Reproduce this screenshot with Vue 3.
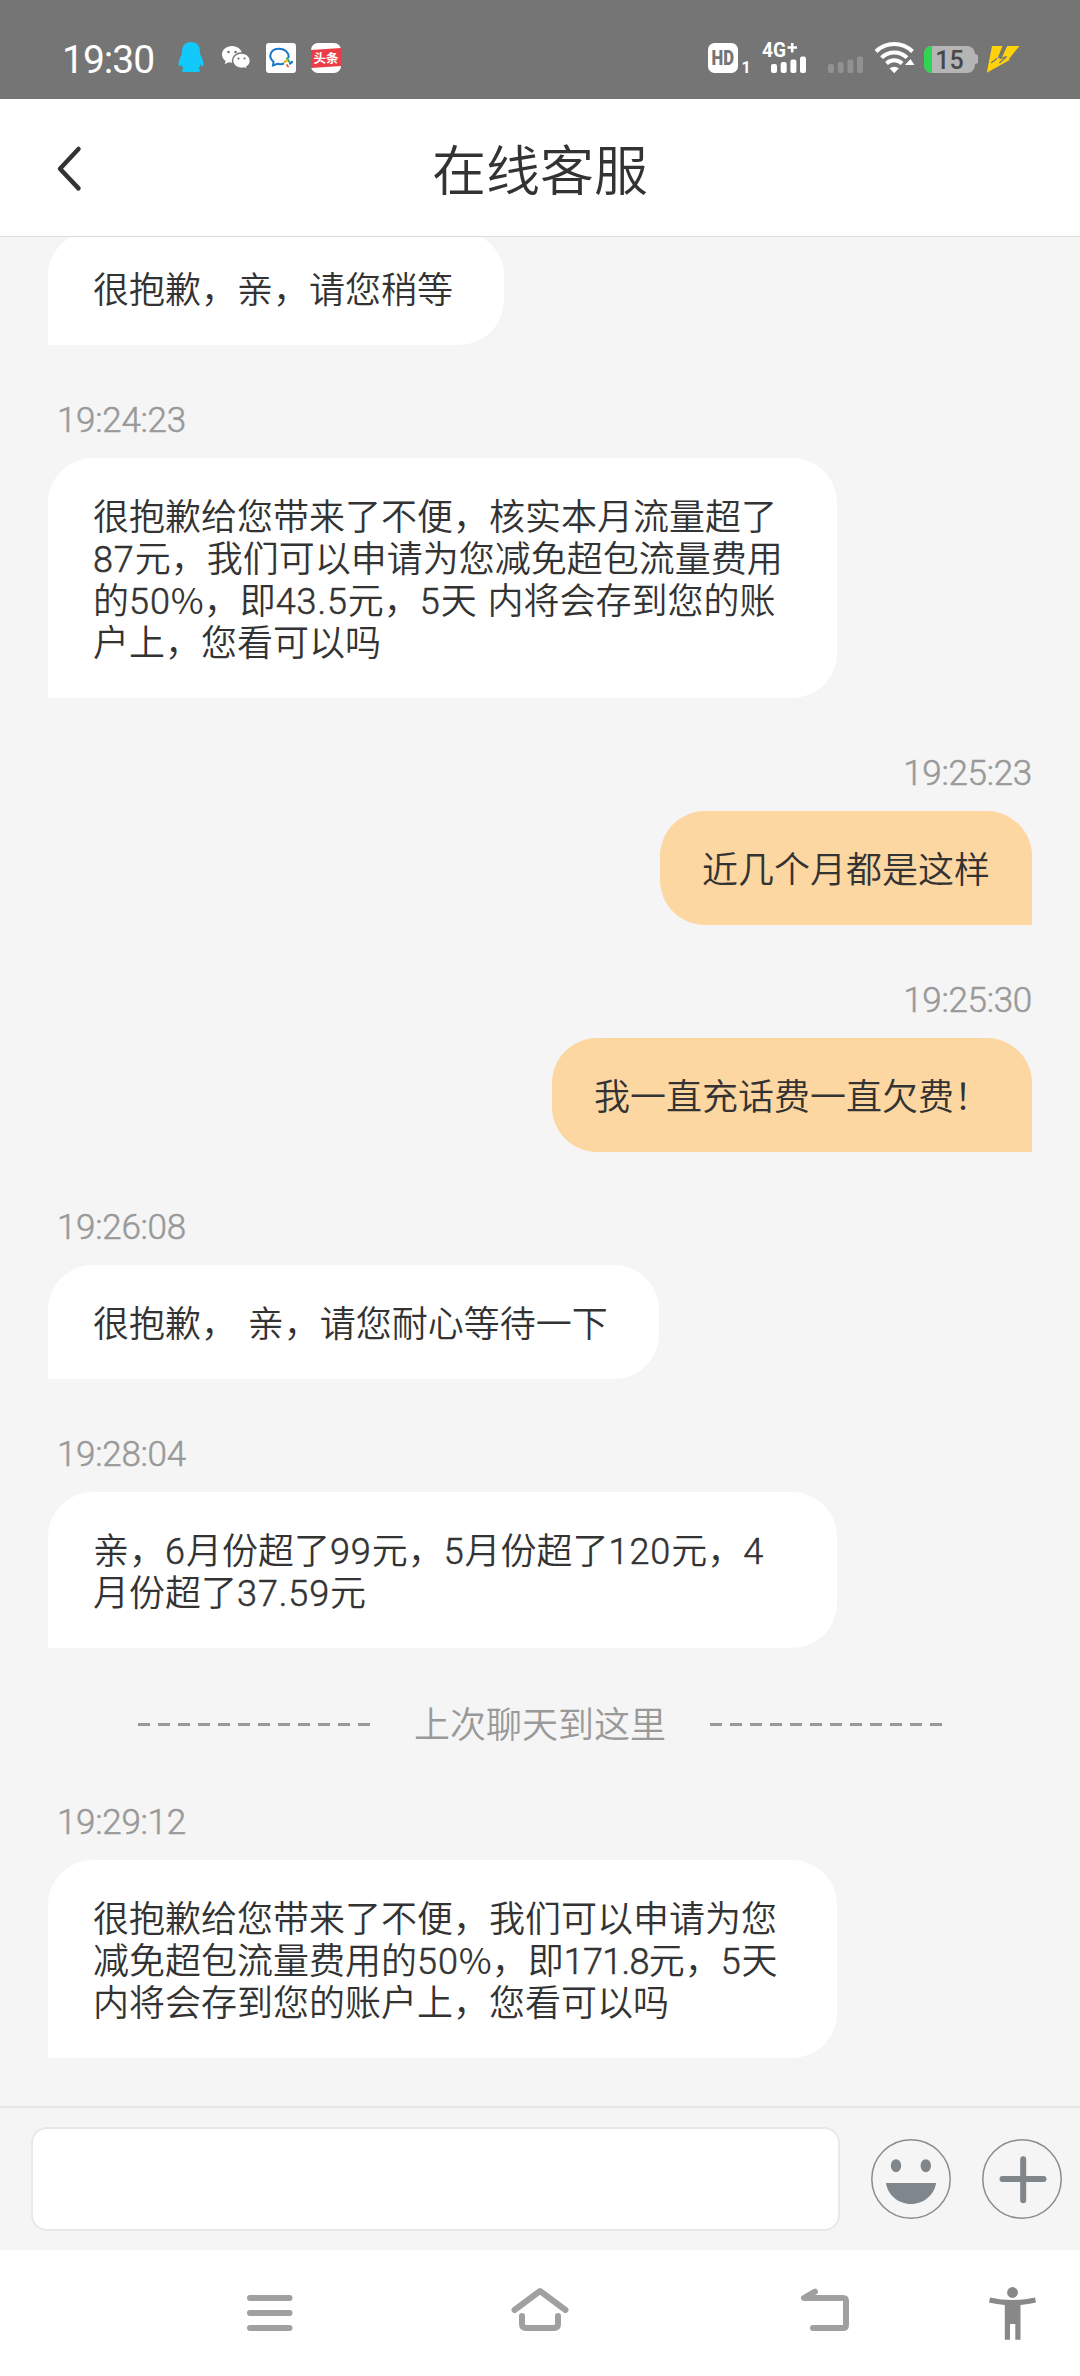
<script setup>
const messages = [
  { side: 'left', lines: ['很抱歉，亲，请您稍等'] },
  {
    side: 'left',
    time: '19:24:23',
    wide: true,
    lines: [
      '很抱歉给您带来了不便，核实本月流量超了',
      '87元，我们可以申请为您减免超包流量费用',
      '的50%，即43.5元，5天 内将会存到您的账',
      '户上，您看可以吗',
    ],
  },
  { side: 'right', time: '19:25:23', lines: ['近几个月都是这样'] },
  { side: 'right', time: '19:25:30', lines: ['我一直充话费一直欠费！'] },
  { side: 'left', time: '19:26:08', lines: ['很抱歉， 亲，请您耐心等待一下'] },
  {
    side: 'left',
    time: '19:28:04',
    wide: true,
    lines: ['亲，6月份超了99元，5月份超了120元，4', '月份超了37.59元'],
  },
  {
    side: 'left',
    time: '19:29:12',
    wide: true,
    divider: '上次聊天到这里',
    lines: [
      '很抱歉给您带来了不便，我们可以申请为您',
      '减免超包流量费用的50%，即171.8元，5天',
      '内将会存到您的账户上，您看可以吗',
    ],
  },
]

// Splits a line into runs so that figures can be spaced apart from the Chinese text.
const runs = (line) =>
  line
    .split(/([0-9.]+|%)/)
    .filter(Boolean)
    .map((text) => ({
      text,
      kind: text === '%' ? 'pct' : /^[0-9.]+$/.test(text) ? (text.includes('71') ? 'num kerned' : 'num') : 'han',
    }))
</script>

<template>
  <div class="phone" lang="zh-CN">
    <div class="status">
      <span class="clock">19:30</span>
      <svg class="apps" width="166" height="32" viewBox="177 42 166 32">
        <path fill="#12c9fb" d="M191 42c-6.500 0-9 4.500-9 9.500 0 2-.3 3-1 4.500-2 4-3 7-2.300 10 .5 1 1.700-.3 2.800-1.500.4 1.700 1 2.800 2 4-2 .8-2.300 3.500.5 3.500h14c2.800 0 2.500-2.700.5-3.500 1-1.200 1.600-2.300 2-4 1.100 1.200 2.300 2.500 2.800 1.500.7-3-.3-6-2.300-10-.7-1.500-1-2.500-1-4.500 0-5-2.500-9.500-9-9.500z" />
        <path fill="#fff" d="M232 46c-5.800 0-10 3.800-10 8.500 0 2.700 1.400 5 3.700 6.500l-1 3.200 3.800-1.900c1.200.3 2.300.5 3.600.5 5.800 0 10-3.800 10-8.300 0-4.700-4.500-8.500-10.100-8.500z" />
        <path fill="#fff" stroke="#757575" stroke-width="1.500" d="M241.500 53c-5.200 0-9 3.500-9 7.700s3.800 7.700 9 7.700c1 0 2-.1 2.900-.4l3.300 1.800-.9-2.900c2.200-1.400 3.600-3.600 3.600-6.200 0-4.200-3.900-7.700-8.900-7.700z" />
        <g fill="#757575"><circle cx="228.500" cy="52" r="1.300" /><circle cx="235.500" cy="52" r="1.300" /><circle cx="238.500" cy="58.500" r="1.100" /><circle cx="244.500" cy="58.500" r="1.100" /></g>
        <rect x="266" y="43" width="30" height="30" rx="3" fill="#fff" />
        <path fill="none" stroke="#1c78c8" stroke-width="2" d="M284 63.500c-2 .7-4.500.8-6.500.3l-4.500 1.700.5-3.700c-6-5-3-13 5.500-13 6.500 0 10.500 4.500 9.500 9.500" />
        <path fill="none" stroke="#2fae58" stroke-width="2.200" stroke-linecap="round" d="M287 58.500l2 3" />
        <path fill="none" stroke="#e9b72c" stroke-width="2.200" stroke-linecap="round" d="M284.500 62l2.500-1.500" />
        <path fill="none" stroke="#e06a3c" stroke-width="2" stroke-linecap="round" d="M287 65l1 1.500" />
        <path fill="none" stroke="#1c78c8" stroke-width="2.200" stroke-linecap="round" d="M290 63.500l2-1.500" />
        <rect x="311" y="43" width="30" height="30" rx="7" fill="#fff" />
        <path fill="#eb3d45" d="M311 50l30-2v18l-30 2z" />
        <text x="326" y="62.500" text-anchor="middle" class="toutiao">头条</text>
      </svg>
      <svg class="signals" width="316" height="50" viewBox="706 33 316 50">
        <rect x="708" y="43" width="30" height="30" rx="6.500" fill="#fff" />
        <text x="711.500" y="65.300" class="hd" textLength="22.500" lengthAdjust="spacingAndGlyphs">HD</text>
        <text x="741.500" y="72.500" class="sim">1</text>
        <text x="762" y="57.300" class="net" textLength="24" lengthAdjust="spacingAndGlyphs">4G</text>
        <path stroke="#fff" stroke-width="2.600" d="M787.500 47.500h9.500M792.200 43v9.500" />
        <g fill="#fff">
          <rect x="771" y="64" width="6" height="9" rx="2" /><rect x="780.700" y="62" width="6" height="11" rx="2" />
          <rect x="790.400" y="59.500" width="6" height="13.500" rx="2" /><rect x="800" y="56.500" width="6" height="16.500" rx="2" />
        </g>
        <g fill="#919191">
          <rect x="828" y="64" width="6" height="9" rx="2" /><rect x="837.700" y="62" width="6" height="11" rx="2" />
          <rect x="847.400" y="59.500" width="6" height="13.500" rx="2" /><rect x="857" y="56.500" width="6" height="16.500" rx="2" />
        </g>
        <g fill="none" stroke="#fff" stroke-width="4">
          <path d="M876 51.500a26 26 0 0 1 36.500 0" />
          <path d="M881.500 57.700a18 18 0 0 1 25.500 0" />
          <path d="M886.500 63.500a11 11 0 0 1 15.500 0" />
        </g>
        <path fill="#fff" d="M889.500 68.300q4.700-3.200 9.400 0l-4.700 5zM905 65l5.500-6 4 6z" />
        <rect x="924" y="46" width="51" height="27" rx="8" fill="#b5b5b5" />
        <path fill="#b5b5b5" d="M975 54c2 0 3 1 3 2.500v5c0 1.500-1 2.500-3 2.500z" />
        <path fill="#2fd550" d="M932 46v27a8 8 0 0 1-8-8V54a8 8 0 0 1 8-8z" />
        <text x="949.500" y="68.600" text-anchor="middle" class="percent">15</text>
        <path fill="#ffd20a" d="M992 46h10.500l-5 12.500 4.500-1.500 4.500-11H1019.500l-11 13.500h2L986.800 72.700z" />
        <path fill="none" stroke="#757575" stroke-width="1.300" d="M1007 45l-6.500 13.500 6-2-7 6.500M991 63l6-4.500" />
      </svg>
    </div>

    <header class="header">
      <svg class="back" width="30" height="50" viewBox="0 0 30 50"><path d="M25.500 6L7 25.700 25.500 45.400" /></svg>
      <h1>在线客服</h1>
    </header>

    <main class="chat">
      <template v-for="(m, i) in messages" :key="i">
        <div v-if="m.divider" class="divider">
          <i class="dashes"></i><span>{{ m.divider }}</span><i class="dashes"></i>
        </div>
        <time v-if="m.time" :class="['time', m.side]">{{ m.time }}</time>
        <div :class="['bubble', m.side, { wide: m.wide }]">
          <p v-for="line in m.lines" :key="line"><span v-for="(r, j) in runs(line)" :key="j" :class="r.kind">{{ r.text }}</span></p>
        </div>
      </template>
    </main>

    <footer class="composer">
      <div class="input"></div>
      <svg width="82" height="82" viewBox="0 0 82 82">
        <circle class="ring" cx="41" cy="41" r="39.200" />
        <ellipse cx="26" cy="27.700" rx="5.200" ry="6.500" fill="#81868b" />
        <ellipse cx="55.800" cy="27.700" rx="5.200" ry="6.500" fill="#81868b" />
        <path d="M16 45h50c-1.500 11.500-12 21-25 21s-23.500-9.500-25-21z" fill="#7f868c" />
      </svg>
      <svg class="plus" width="82" height="82" viewBox="0 0 82 82">
        <circle class="ring" cx="41" cy="41" r="39.200" />
        <path d="M21.500 41h41M42.200 21.300v41" stroke="#81868b" stroke-width="6" stroke-linecap="round" />
      </svg>
    </footer>

    <nav class="nav">
      <svg width="1080" height="126" viewBox="0 2250 1080 126">
        <g fill="none" stroke="#a0a0a0" stroke-width="6" stroke-linecap="round" stroke-linejoin="round">
          <path d="M250 2298h39.500M250 2313h39.500M250 2328h39.500" />
          <path d="M514.500 2310l25.500-19 25.500 19M522 2316v8q0 4 4 4h28q4 0 4-4v-8" />
          <path d="M815 2291.700l-11 6.300h39q3 0 3 3v24q0 3-3 3h-30" />
        </g>
        <g fill="#888">
          <circle cx="1012.500" cy="2292.500" r="5.400" />
          <path d="M990 2297.500q22.500 5 45 0l1 5q-7.500 1.700-15.500 2.500v34.700h-5.200V2324h-5.300v15.700h-5.200V2305q-8-.8-15.800-2.500z" />
        </g>
      </svg>
    </nav>
  </div>
</template>

<style>
body {
  margin: 0;
}
</style>

<style scoped>
.phone {
  width: 1080px;
  height: 2376px;
  display: flex;
  flex-direction: column;
  background: #f5f5f5;
  font-family: Roboto, 'Noto Sans CJK SC', sans-serif;
  font-weight: 350;
  color: #333;
  overflow: hidden;
}
.status {
  flex: none;
  height: 99px;
  box-sizing: border-box;
  padding: 16px 58px 0 62px;
  display: flex;
  align-items: center;
  background: #757575;
  color: #fff;
}
.clock {
  width: 115px;
  font-size: 39px;
  font-weight: 400;
  letter-spacing: -1px;
  line-height: 46px;
  padding-top: 5px;
}
.signals {
  margin-left: auto;
}
.toutiao {
  font: 700 12.500px 'Noto Sans CJK SC', sans-serif;
  fill: #fff;
}
.hd {
  font: 900 20px Roboto, sans-serif;
  fill: #757575;
}
.sim {
  font: 700 16px Roboto, sans-serif;
  fill: #fff;
}
.net {
  font: 700 20px Roboto, sans-serif;
  fill: #fff;
}
.percent {
  font: 500 25px Roboto, sans-serif;
  fill: #484848;
}
.header {
  flex: none;
  height: 138px;
  box-sizing: border-box;
  border-bottom: 1px solid #dcdcdc;
  padding: 0 53px;
  display: flex;
  align-items: center;
  justify-content: space-between;
  background: #fff;
}
.header::after {
  content: '';
  width: 30px;
}
.back path {
  fill: none;
  stroke: #333;
  stroke-width: 4.500;
  stroke-linecap: round;
  stroke-linejoin: round;
}
h1 {
  margin: 0;
  padding-top: 10px;
  font-size: 54px;
  font-weight: 350;
  line-height: 70px;
}
.chat {
  flex: 1;
  min-height: 0;
  display: flex;
  flex-direction: column;
  justify-content: flex-end;
  align-items: flex-start;
  padding: 0 48px;
  padding-bottom: 48px;
  overflow: hidden;
}
.time {
  flex: none;
  height: 113px;
  box-sizing: border-box;
  padding: 56px 10px 0 9px;
  font-size: 35px;
  line-height: 40px;
  letter-spacing: -0.300px;
  color: #999;
  -webkit-text-stroke: 0.500px #999;
}
.time.right {
  padding-right: 0;
}
.bubble {
  flex: none;
  box-sizing: border-box;
  padding: 39px 51px 33px 45px;
  border-radius: 45px 45px 45px 0;
  background: #fff;
  font-size: 36px;
  line-height: 42px;
  word-spacing: 2px;
}
.bubble.wide {
  width: 789px;
  padding-right: 0;
}
.right {
  align-self: flex-end;
}
.bubble.right {
  padding: 39px 42px 33px;
  border-radius: 45px 45px 0 45px;
  background: #fcd7a2;
}
.bubble p {
  margin: 0;
  height: 42px;
  white-space: pre;
}
.num {
  letter-spacing: 0.900px;
  -webkit-text-stroke: 0.500px #333;
}
.num.kerned {
  letter-spacing: -0.700px;
}
.pct {
  font-family: 'Noto Sans CJK SC', sans-serif;
  line-height: 0;
}
.divider {
  flex: none;
  align-self: stretch;
  height: 99px;
  box-sizing: border-box;
  padding-top: 53px;
  display: flex;
  align-items: center;
  justify-content: center;
  gap: 44px;
  font-size: 36px;
  line-height: 42px;
  color: #999;
}
.divider span {
  padding-top: 4px;
}
.dashes {
  width: 232px;
  height: 3px;
  background: repeating-linear-gradient(90deg, #999 0 12px, transparent 12px 20px);
}
.composer {
  flex: none;
  height: 144px;
  box-sizing: border-box;
  border-top: 2px solid #e6e6e6;
  padding: 0 17px 0 31px;
  display: flex;
  align-items: center;
}
.input {
  width: 809px;
  height: 104px;
  box-sizing: border-box;
  border: 2px solid #e8e8e8;
  border-radius: 16px;
  margin-right: 30px;
  background: #fff;
}
.plus {
  margin-left: 29px;
}
.ring {
  fill: none;
  stroke: #8c8c8c;
  stroke-width: 1.500;
}
.nav {
  flex: none;
  height: 126px;
  background: #fff;
}
.nav svg {
  display: block;
}
</style>
